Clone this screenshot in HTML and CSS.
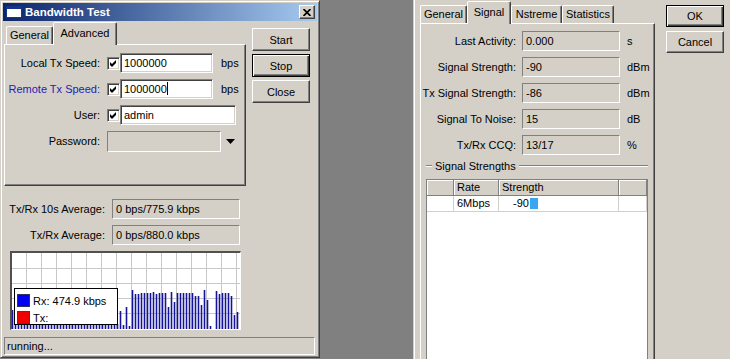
FILE: index.html
```html
<!DOCTYPE html>
<html lang="en">
<head>
    <meta charset="UTF-8">
    <meta name="viewport" content="width=device-width, initial-scale=1.0">
    <title>Bandwidth Test</title>
    <link rel="stylesheet" href="styles.css">
</head>
<body>
    <div class="desktop">
        <!-- Bandwidth Test window -->
        <div class="window win-test">
            <div class="titlebar">
                <svg class="title-icon" width="16" height="12" viewBox="0 0 16 12">
                    <rect x="0.5" y="0.5" width="15" height="11" fill="#fff" stroke="#16348c"/>
                    <rect x="1" y="1" width="14" height="2" fill="#16348c"/>
                </svg>
                <span class="title-text">Bandwidth Test</span>
                <div class="title-close">
                    <svg width="8" height="7" viewBox="0 0 8 7"><path d="M0.5 0L7.5 7M7.5 0L0.5 7" stroke="#000" stroke-width="1.7"/></svg>
                </div>
            </div>

            <div class="win-body">
                <div class="main-col test-col">
                    <div class="tabs tabs-left">
                        <div class="tab tab-w47">General</div>
                        <div class="tab tab-w64 active">Advanced</div>
                    </div>
                    <div class="panel adv-panel">
                        <div class="form-row">
                            <span class="lbl">Local Tx Speed:</span>
                            <span class="check"><svg width="11" height="11" viewBox="0 0 11 11"><path d="M2 4L4 6L8 2L8 5L4 9L2 7Z" fill="#000"/></svg></span>
                            <div class="field-edit w-speed">1000000</div>
                            <span class="unit">bps</span>
                        </div>
                        <div class="form-row">
                            <span class="lbl lbl-blue">Remote Tx Speed:</span>
                            <span class="check"><svg width="11" height="11" viewBox="0 0 11 11"><path d="M2 4L4 6L8 2L8 5L4 9L2 7Z" fill="#000"/></svg></span>
                            <div class="field-edit w-speed">1000000<span class="caret"></span></div>
                            <span class="unit">bps</span>
                        </div>
                        <div class="form-row">
                            <span class="lbl">User:</span>
                            <span class="check"><svg width="11" height="11" viewBox="0 0 11 11"><path d="M2 4L4 6L8 2L8 5L4 9L2 7Z" fill="#000"/></svg></span>
                            <div class="field-edit w-user">admin</div>
                        </div>
                        <div class="form-row">
                            <span class="lbl">Password:</span>
                            <div class="field-ro w-pass"></div>
                            <svg class="drop-arrow" width="9" height="5" viewBox="0 0 9 5"><path d="M0 0H9L4.5 5Z" fill="#000"/></svg>
                        </div>
                    </div>

                    <div class="stats">
                        <div class="stat-row">
                            <span class="lbl">Tx/Rx 10s Average:</span>
                            <div class="field-ro w-stat">0 bps/775.9 kbps</div>
                        </div>
                        <div class="stat-row">
                            <span class="lbl">Tx/Rx Average:</span>
                            <div class="field-ro w-stat">0 bps/880.0 kbps</div>
                        </div>
                    </div>

                    <div class="graph">
                        <svg width="228" height="76" viewBox="12 253 228 76">
                            <path stroke="#c8c8c8" stroke-width="1" fill="none"
                                d="M26.5 253V329M41.5 253V329M56.5 253V329M71.5 253V329M86.5 253V329M101.5 253V329M116.5 253V329M131.5 253V329M146.5 253V329M161.5 253V329M176.5 253V329M191.5 253V329M206.5 253V329M221.5 253V329M236.5 253V329M12 268.5H240M12 283.5H240M12 298.5H240M12 313.5H240"/>
                            <path stroke="#14149a" stroke-width="1.6" fill="none"
                                d="M12.5 310V329M15.5 324V329M18.5 324V329M21.5 324V329M24.5 324V329M27.5 324V329M30.5 324V329M33.5 324V329M36.5 324V329M39.5 324V329M42.5 324V329M45.5 324V329M48.5 324V329M51.5 324V329M54.5 324V329M57.5 324V329M60.5 324V329M63.5 324V329M66.5 324V329M69.5 324V329M72.5 324V329M75.5 324V329M78.5 324V329M81.5 324V329M84.5 324V329M87.5 324V329M90.5 324V329M93.5 324V329M96.5 324V329M99.5 324V329M102.5 324V329M105.5 324V329M108.5 324V329M111.5 324V329M114.5 324V329M117.5 324V329M120.5 311V329M123.5 325V329M126.5 307V329M129.5 326V329M132.5 290V329M135.5 294V329M138.5 294V329M141.5 293V329M144.5 293V329M147.5 293V329M150.5 293V329M153.5 292V329M156.5 294V329M159.5 293V329M162.5 293V329M165.5 293V329M168.5 307V329M171.5 292V329M174.5 302V329M177.5 293V329M180.5 293V329M183.5 293V329M186.5 293V329M189.5 293V329M192.5 293V329M195.5 296V329M198.5 296V329M201.5 305V329M204.5 290V329M207.5 300V329M210.5 326V329M216.5 291V329M219.5 294V329M222.5 293V329M225.5 293V329M228.5 293V329M231.5 296V329M234.5 315V329M237.5 312V329"/>
                        </svg>
                        <div class="legend">
                            <div class="legend-row"><span class="swatch swatch-rx"></span>Rx: 474.9 kbps</div>
                            <div class="legend-row"><span class="swatch swatch-tx"></span>Tx:</div>
                        </div>
                    </div>
                </div>

                <div class="btn-col test-btns">
                    <div class="btn">Start</div>
                    <div class="btn default">Stop</div>
                    <div class="btn">Close</div>
                </div>
            </div>

            <div class="statusbar">running...</div>
        </div>

        <!-- Wireless interface window (partly visible) -->
        <div class="window win-wireless">
            <div class="main-col sig-col">
                <div class="tabs">
                    <div class="tab tab-w47">General</div>
                    <div class="tab tab-w44 active">Signal</div>
                    <div class="tab tab-w51">Nstreme</div>
                    <div class="tab tab-w52">Statistics</div>
                </div>
                <div class="panel sig-panel">
                    <div class="form-row sig-row">
                        <span class="lbl">Last Activity:</span>
                        <div class="field-ro w-sig">0.000</div>
                        <span class="unit">s</span>
                    </div>
                    <div class="form-row sig-row">
                        <span class="lbl">Signal Strength:</span>
                        <div class="field-ro w-sig">-90</div>
                        <span class="unit">dBm</span>
                    </div>
                    <div class="form-row sig-row">
                        <span class="lbl">Tx Signal Strength:</span>
                        <div class="field-ro w-sig">-86</div>
                        <span class="unit">dBm</span>
                    </div>
                    <div class="form-row sig-row">
                        <span class="lbl">Signal To Noise:</span>
                        <div class="field-ro w-sig">15</div>
                        <span class="unit">dB</span>
                    </div>
                    <div class="form-row sig-row">
                        <span class="lbl">Tx/Rx CCQ:</span>
                        <div class="field-ro w-sig">13/17</div>
                        <span class="unit">%</span>
                    </div>

                    <div class="group">
                        <div class="group-title">
                            <span class="etch etch-short"></span>
                            <span class="group-text">Signal Strengths</span>
                            <span class="etch"></span>
                        </div>
                        <div class="grid">
                            <div class="grid-head">
                                <div></div>
                                <div>Rate</div>
                                <div>Strength</div>
                                <div></div>
                            </div>
                            <div class="grid-row">
                                <div></div>
                                <div>6Mbps</div>
                                <div class="strength">-90<span class="level"></span></div>
                                <div></div>
                            </div>
                        </div>
                    </div>
                </div>
            </div>

            <div class="btn-col ok-btns">
                <div class="btn default">OK</div>
                <div class="btn">Cancel</div>
            </div>
        </div>
    </div>
</body>
</html>
```

FILE: styles.css
```css
body {
    margin: 0;
    background: #808080;
    font-family: "Liberation Sans", Tahoma, Arial, sans-serif;
    font-size: 11px;
    color: #000;
    overflow: hidden;
}
.desktop {
    display: flex;
    align-items: flex-start;
    width: 730px;
    height: 359px;
    overflow: hidden;
}
.window {
    background: #d4d0c8;
    box-sizing: border-box;
}

/* left window */
.win-test {
    width: 320px;
    border: 1px solid;
    border-color: #d4d0c8 #404040 #404040 #d4d0c8;
    box-shadow: inset 1px 1px #fff, inset -1px -1px #808080;
    padding: 2px;
}
.titlebar {
    height: 18px;
    display: flex;
    align-items: center;
    padding: 0 2px 0 3px;
    background: linear-gradient(to right, #0a246a, #a6caf0);
    color: #fff;
    font-weight: bold;
    font-size: 11.5px;
}
.title-icon {
    margin-right: 3px;
}
.title-text {
    flex: 1;
}
.title-close {
    width: 16px;
    height: 14px;
    box-sizing: border-box;
    display: flex;
    align-items: center;
    justify-content: center;
    background: #d4d0c8;
    border: 1px solid;
    border-color: #fff #404040 #404040 #fff;
    box-shadow: inset -1px -1px #808080;
}
.win-body {
    display: flex;
    padding: 1px 0 0 1px;
}
.test-col {
    width: 242px;
}

/* tabs */
.tabs {
    display: flex;
    align-items: flex-start;
    height: 22px;
}
.tabs-left {
    padding-left: 2px;
}
.tab {
    height: 18px;
    margin-top: 4px;
    box-sizing: border-box;
    border: 1px solid;
    border-bottom: none;
    border-color: #fff #404040 transparent #fff;
    box-shadow: inset -1px 0 #808080;
    border-radius: 2px 2px 0 0;
    text-align: center;
    line-height: 16px;
}
.tab.active {
    height: 23px;
    margin-top: 0;
    line-height: 20px;
    position: relative;
    z-index: 1;
    background: #d4d0c8;
}
.tab-w44 { width: 44px; }
.tab-w47 { width: 47px; }
.tab-w51 { width: 51px; }
.tab-w52 { width: 52px; }
.tab-w64 { width: 64px; }

.panel {
    box-sizing: border-box;
    border: 1px solid;
    border-color: #fff #404040 #404040 #fff;
    box-shadow: inset -1px -1px #808080;
}
.adv-panel {
    height: 142px;
    padding-top: 8px;
}

/* form rows */
.form-row {
    display: flex;
    align-items: center;
    height: 20px;
    margin-bottom: 6px;
}
.form-row .lbl {
    width: 95px;
    margin-right: 7px;
    text-align: right;
}
.lbl-blue {
    color: #1c1cb4;
}
.check {
    width: 13px;
    height: 13px;
    box-sizing: border-box;
    border: 1px solid;
    border-color: #808080 #fff #fff #808080;
    box-shadow: inset 1px 1px #404040, inset -1px -1px #d4d0c8;
    background: #fff;
}
.check svg {
    display: block;
}
.field-edit,
.field-ro {
    height: 20px;
    box-sizing: border-box;
    border: 1px solid;
    border-color: #808080 #fff #fff #808080;
    padding-left: 3px;
    line-height: 18px;
    white-space: nowrap;
}
.field-edit {
    background: #fff;
    box-shadow: inset 1px 1px #404040, inset -1px -1px #d4d0c8;
}
.caret {
    display: inline-block;
    width: 1px;
    height: 13px;
    background: #000;
    vertical-align: -2px;
}
.w-speed { width: 93px; }
.w-user { width: 116px; }
.w-pass { width: 114px; height: 21px; }
.w-stat { width: 128px; }
.w-sig { width: 98px; }
.unit {
    margin-left: 8px;
}
.drop-arrow {
    margin-left: 5px;
}

/* averages */
.stats {
    margin-top: 13px;
}
.stat-row {
    display: flex;
    align-items: center;
    margin-bottom: 6px;
}
.stat-row .lbl {
    width: 101px;
    margin-right: 7px;
    text-align: right;
}

/* traffic graph */
.graph {
    position: relative;
    width: 231px;
    height: 79px;
    margin-left: 6px;
    box-sizing: border-box;
    border: 2px solid;
    border-color: #505050 #fff #fff #505050;
    border-right-width: 1px;
    border-bottom-width: 1px;
    background: #fff;
}
.graph svg {
    display: block;
}
.legend {
    position: absolute;
    left: 2px;
    top: 35px;
    width: 104px;
    height: 37px;
    box-sizing: border-box;
    border: 1px solid #000;
    background: #fff;
    padding: 3px 2px 0;
}
.legend-row {
    display: flex;
    align-items: center;
    height: 17px;
}
.swatch {
    width: 13px;
    height: 13px;
    box-sizing: border-box;
    margin-right: 3px;
    border: 1px solid #303060;
}
.swatch-rx { background: #0000f4; }
.swatch-tx { background: #f00000; border-color: #603030; }

/* buttons */
.btn-col {
    display: flex;
    flex-direction: column;
    width: 58px;
}
.test-btns {
    margin: 6px 0 0 6px;
    gap: 3px;
}
.btn {
    height: 23px;
    box-sizing: border-box;
    border: 1px solid;
    border-color: #fff #404040 #404040 #fff;
    box-shadow: inset -1px -1px #808080;
    display: flex;
    align-items: center;
    justify-content: center;
}
.btn.default {
    border-color: #000;
    box-shadow: inset 1px 1px #fff, inset -1px -1px #404040, inset -2px -2px #808080;
}

.statusbar {
    margin: 7px 2px 0 1px;
    height: 18px;
    box-sizing: border-box;
    border: 1px solid;
    border-color: #808080 #fff #fff #808080;
    padding-left: 2px;
    line-height: 16px;
}

/* right window */
.win-wireless {
    flex: 1;
    display: flex;
    align-items: flex-start;
    height: 359px;
    margin-left: 93px;
    padding: 1px 0 0 6px;
    border-left: 1px solid #d4d0c8;
    box-shadow: inset 1px 0 #fff;
}
.sig-col {
    width: 235px;
}
.sig-panel {
    height: 345px;
    padding-top: 7px;
}
.sig-row .lbl {
    margin-right: 6px;
}
.sig-row .unit {
    margin-left: 7px;
}
.ok-btns {
    margin: 4px 0 0 11px;
    gap: 4px;
}
.ok-btns .btn {
    height: 22px;
}

/* signal strengths group */
.group {
    margin: -2px 0 0 5px;
    width: 222px;
}
.group-title {
    display: flex;
    align-items: center;
    height: 13px;
}
.etch {
    flex: 1;
    height: 0;
    border-top: 1px solid #808080;
    border-bottom: 1px solid #fff;
}
.etch-short {
    flex: none;
    width: 6px;
}
.group-text {
    padding: 0 3px;
}
.grid {
    margin-top: 7px;
    height: 200px;
    border: 1px solid #808080;
    background: #fff;
}
.grid-head,
.grid-row {
    display: grid;
    grid-template-columns: 27px 45px 120px 1fr;
}
.grid-head div {
    height: 16px;
    box-sizing: border-box;
    padding-left: 3px;
    line-height: 15px;
    background: #d4d0c8;
    border-right: 1px solid #808080;
    border-bottom: 1px solid #808080;
    box-shadow: inset 1px 1px #fff;
}
.grid-row div {
    height: 16px;
    box-sizing: border-box;
    padding-left: 3px;
    line-height: 15px;
    border-right: 1px solid #d4d0c8;
    border-bottom: 1px solid #d4d0c8;
}
.grid-row .strength {
    padding-left: 14px;
    display: flex;
    align-items: center;
}
.level {
    width: 8px;
    height: 11px;
    margin-left: 1px;
    background: #3aa6f0;
}
```
